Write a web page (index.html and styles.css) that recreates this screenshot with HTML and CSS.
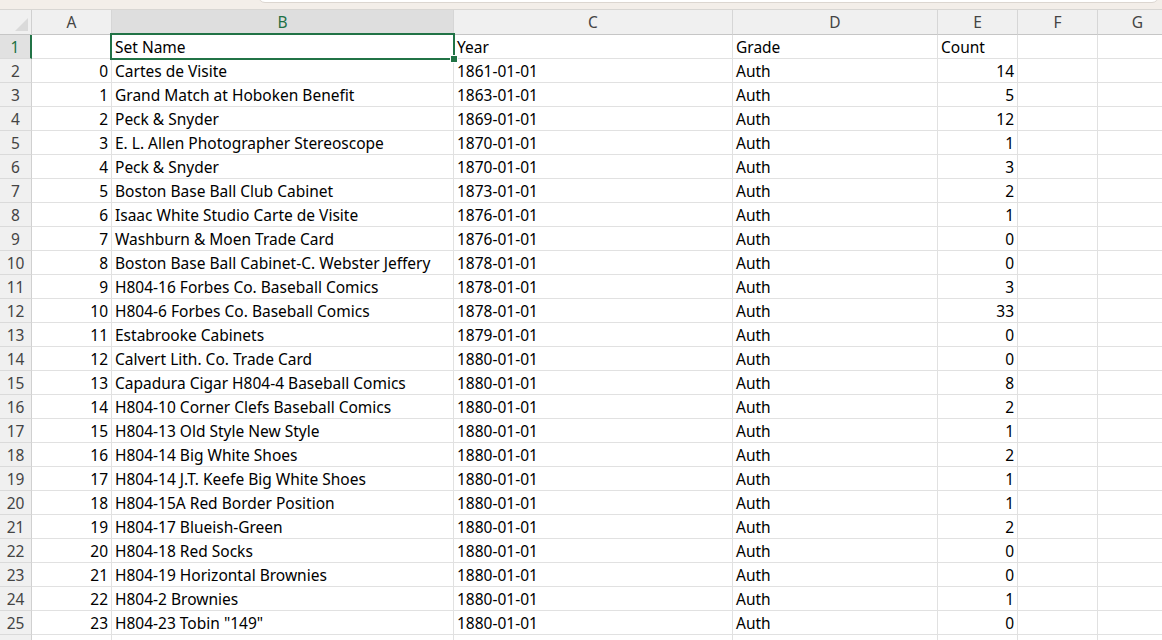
FILE: index.html
```html
<!DOCTYPE html>
<html>
<head>
<meta charset="utf-8">
<link rel="stylesheet" href="styles.css">
</head>
<body>
<div class="app">
  <div class="topband"><div class="tab-edge"></div></div>
  <div class="sheet">
    <div class="grid">
      <div class="corner"><span class="tri"></span></div>
      <div class="ch">A</div><div class="ch sel">B</div><div class="ch">C</div><div class="ch">D</div><div class="ch">E</div><div class="ch">F</div><div class="ch">G</div>

      <div class="rh rsel">1</div><div class="c n"></div><div class="c">Set Name</div><div class="c">Year</div><div class="c">Grade</div><div class="c">Count</div><div class="c"></div><div class="c"></div>
      <div class="rh">2</div><div class="c n">0</div><div class="c">Cartes de Visite</div><div class="c">1861-01-01</div><div class="c">Auth</div><div class="c n">14</div><div class="c"></div><div class="c"></div>
      <div class="rh">3</div><div class="c n">1</div><div class="c">Grand Match at Hoboken Benefit</div><div class="c">1863-01-01</div><div class="c">Auth</div><div class="c n">5</div><div class="c"></div><div class="c"></div>
      <div class="rh">4</div><div class="c n">2</div><div class="c">Peck &amp; Snyder</div><div class="c">1869-01-01</div><div class="c">Auth</div><div class="c n">12</div><div class="c"></div><div class="c"></div>
      <div class="rh">5</div><div class="c n">3</div><div class="c">E. L. Allen Photographer Stereoscope</div><div class="c">1870-01-01</div><div class="c">Auth</div><div class="c n">1</div><div class="c"></div><div class="c"></div>
      <div class="rh">6</div><div class="c n">4</div><div class="c">Peck &amp; Snyder</div><div class="c">1870-01-01</div><div class="c">Auth</div><div class="c n">3</div><div class="c"></div><div class="c"></div>
      <div class="rh">7</div><div class="c n">5</div><div class="c">Boston Base Ball Club Cabinet</div><div class="c">1873-01-01</div><div class="c">Auth</div><div class="c n">2</div><div class="c"></div><div class="c"></div>
      <div class="rh">8</div><div class="c n">6</div><div class="c">Isaac White Studio Carte de Visite</div><div class="c">1876-01-01</div><div class="c">Auth</div><div class="c n">1</div><div class="c"></div><div class="c"></div>
      <div class="rh">9</div><div class="c n">7</div><div class="c">Washburn &amp; Moen Trade Card</div><div class="c">1876-01-01</div><div class="c">Auth</div><div class="c n">0</div><div class="c"></div><div class="c"></div>
      <div class="rh">10</div><div class="c n">8</div><div class="c">Boston Base Ball Cabinet-C. Webster Jeffery</div><div class="c">1878-01-01</div><div class="c">Auth</div><div class="c n">0</div><div class="c"></div><div class="c"></div>
      <div class="rh">11</div><div class="c n">9</div><div class="c">H804-16 Forbes Co. Baseball Comics</div><div class="c">1878-01-01</div><div class="c">Auth</div><div class="c n">3</div><div class="c"></div><div class="c"></div>
      <div class="rh">12</div><div class="c n">10</div><div class="c">H804-6 Forbes Co. Baseball Comics</div><div class="c">1878-01-01</div><div class="c">Auth</div><div class="c n">33</div><div class="c"></div><div class="c"></div>
      <div class="rh">13</div><div class="c n">11</div><div class="c">Estabrooke Cabinets</div><div class="c">1879-01-01</div><div class="c">Auth</div><div class="c n">0</div><div class="c"></div><div class="c"></div>
      <div class="rh">14</div><div class="c n">12</div><div class="c">Calvert Lith. Co. Trade Card</div><div class="c">1880-01-01</div><div class="c">Auth</div><div class="c n">0</div><div class="c"></div><div class="c"></div>
      <div class="rh">15</div><div class="c n">13</div><div class="c">Capadura Cigar H804-4 Baseball Comics</div><div class="c">1880-01-01</div><div class="c">Auth</div><div class="c n">8</div><div class="c"></div><div class="c"></div>
      <div class="rh">16</div><div class="c n">14</div><div class="c">H804-10 Corner Clefs Baseball Comics</div><div class="c">1880-01-01</div><div class="c">Auth</div><div class="c n">2</div><div class="c"></div><div class="c"></div>
      <div class="rh">17</div><div class="c n">15</div><div class="c">H804-13 Old Style New Style</div><div class="c">1880-01-01</div><div class="c">Auth</div><div class="c n">1</div><div class="c"></div><div class="c"></div>
      <div class="rh">18</div><div class="c n">16</div><div class="c">H804-14 Big White Shoes</div><div class="c">1880-01-01</div><div class="c">Auth</div><div class="c n">2</div><div class="c"></div><div class="c"></div>
      <div class="rh">19</div><div class="c n">17</div><div class="c">H804-14 J.T. Keefe Big White Shoes</div><div class="c">1880-01-01</div><div class="c">Auth</div><div class="c n">1</div><div class="c"></div><div class="c"></div>
      <div class="rh">20</div><div class="c n">18</div><div class="c">H804-15A Red Border Position</div><div class="c">1880-01-01</div><div class="c">Auth</div><div class="c n">1</div><div class="c"></div><div class="c"></div>
      <div class="rh">21</div><div class="c n">19</div><div class="c">H804-17 Blueish-Green</div><div class="c">1880-01-01</div><div class="c">Auth</div><div class="c n">2</div><div class="c"></div><div class="c"></div>
      <div class="rh">22</div><div class="c n">20</div><div class="c">H804-18 Red Socks</div><div class="c">1880-01-01</div><div class="c">Auth</div><div class="c n">0</div><div class="c"></div><div class="c"></div>
      <div class="rh">23</div><div class="c n">21</div><div class="c">H804-19 Horizontal Brownies</div><div class="c">1880-01-01</div><div class="c">Auth</div><div class="c n">0</div><div class="c"></div><div class="c"></div>
      <div class="rh">24</div><div class="c n">22</div><div class="c">H804-2 Brownies</div><div class="c">1880-01-01</div><div class="c">Auth</div><div class="c n">1</div><div class="c"></div><div class="c"></div>
      <div class="rh">25</div><div class="c n">23</div><div class="c">H804-23 Tobin "149"</div><div class="c">1880-01-01</div><div class="c">Auth</div><div class="c n">0</div><div class="c"></div><div class="c"></div>
      <div class="rh"></div><div class="c"></div><div class="c"></div><div class="c"></div><div class="c"></div><div class="c"></div><div class="c"></div><div class="c"></div>
    </div>
    <div class="selection"><span class="handle"></span></div>
  </div>
</div>
</body>
</html>
```

FILE: styles.css
```css
html, body {
  margin: 0;
  padding: 0;
  background: #ffffff;
  overflow: hidden;
}
body {
  width: 1162px;
  height: 640px;
  font-family: "Noto Sans", "Liberation Sans", sans-serif;
  font-size: 15.5px;
  color: #000;
}
.app {
  width: 1162px;
  height: 640px;
  overflow: hidden;
}
.topband {
  position: relative;
  height: 9px;
  background: #f3eee9;
  border-bottom: 1px solid #d8d6d3;
}
.tab-edge {
  position: absolute;
  left: 258px;
  top: -8px;
  width: 899px;
  height: 9px;
  background: #ffffff;
  border: 1px solid #dcd6d0;
  border-radius: 0 0 7px 7px;
}
.sheet {
  position: relative;
}
.grid {
  display: grid;
  grid-template-columns: 32px 80px 342px 279px 205px 80px 80px 80px;
  grid-template-rows: 25px;
  grid-auto-rows: 24px;
  width: 1178px;
}
.grid > div {
  box-sizing: border-box;
  overflow: hidden;
  white-space: nowrap;
}
.corner {
  position: relative;
  background: #f0f0f0;
  border-right: 1px solid #d0d0d0;
  border-bottom: 1px solid #c6c6c6;
}
.tri {
  position: absolute;
  right: 3px;
  bottom: 3px;
  width: 13px;
  height: 13px;
  background: #dadada;
  clip-path: polygon(100% 0, 100% 100%, 0 100%);
}
.ch {
  background: #f0f0f0;
  border-right: 1px solid #d6d6d6;
  border-bottom: 1px solid #c6c6c6;
  color: #444;
  text-align: center;
  padding-top: 1px;
  line-height: 23px;
}
.ch.sel {
  background: #dedede;
  color: #1e7145;
  border-bottom: 2px solid #217346;
  line-height: 22px;
}
.rh {
  background: #f0f0f0;
  border-right: 1px solid #d0d0d0;
  border-bottom: 1px solid #dadada;
  color: #444;
  text-align: center;
  padding-top: 1px;
  line-height: 22px;
}
.rh.rsel {
  background: #e1e1e1;
  color: #1e7145;
  border-right: 2px solid #217346;
}
.c {
  border-right: 1px solid #e1e1e1;
  border-bottom: 1px solid #e1e1e1;
  padding: 1px 3px 0;
  line-height: 22px;
}
.c.n {
  text-align: right;
}
.selection {
  position: absolute;
  left: 110px;
  top: 23px;
  width: 345px;
  height: 27px;
  box-sizing: border-box;
  border: 2px solid #217346;
}
.handle {
  position: absolute;
  right: -5px;
  bottom: -5px;
  width: 6px;
  height: 6px;
  background: #217346;
  border: 1px solid #ffffff;
}
```
